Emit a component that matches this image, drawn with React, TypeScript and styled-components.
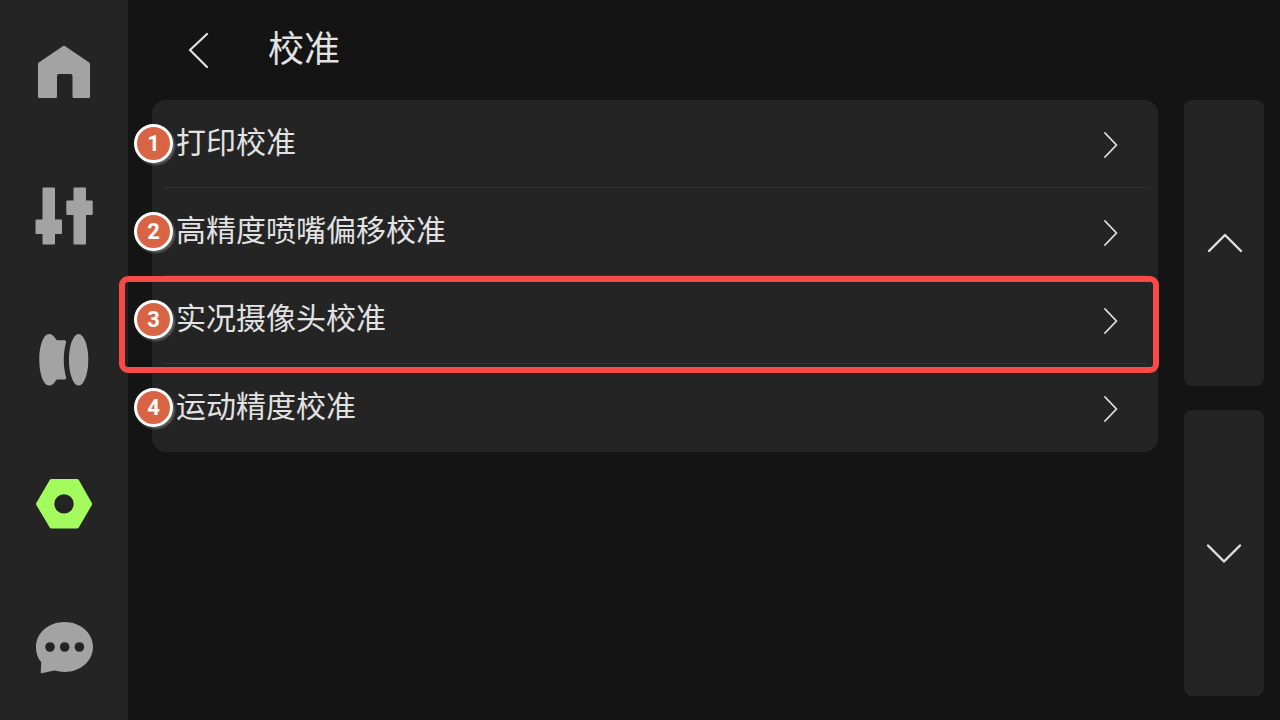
import React from "react";
import styled, { createGlobalStyle } from "styled-components";

const GlobalStyle = createGlobalStyle`
  *, *::before, *::after { box-sizing: border-box; }
  body {
    margin: 0;
    background: #141414;
    color: #e2e2e2;
    font-family: "Noto Sans CJK SC", "Noto Sans", sans-serif;
  }
  button { font: inherit; color: inherit; border: 0; padding: 0; cursor: pointer; }
`;

const Screen = styled.div`
  display: flex;
  min-height: 100vh;
`;

const Sidebar = styled.nav`
  flex: 0 0 128px;
  display: flex;
  flex-direction: column;
  background: #242424;
`;

const NavButton = styled.button<{ $active?: boolean }>`
  flex: 1;
  display: flex;
  align-items: center;
  justify-content: center;
  background: none;
  color: ${(p) => (p.$active ? "#a4fb5e" : "#a3a3a3")};
`;

const Main = styled.main`
  flex: 1;
  min-width: 0;
  display: flex;
  flex-direction: column;
  padding: 0 16px 24px 24px;
`;

const Header = styled.header`
  display: flex;
  align-items: center;
  gap: 44px;
  height: 100px;
  padding-left: 24px;
`;

const BackButton = styled.button`
  display: flex;
  background: none;
`;

const Title = styled.h1`
  margin: 0;
  padding-bottom: 8px;
  font-size: 36px;
  line-height: 48px;
  font-weight: 400;
`;

const Content = styled.div`
  flex: 1;
  display: flex;
  gap: 26px;
`;

const List = styled.ul`
  flex: 1;
  align-self: flex-start;
  margin: 0;
  padding: 0;
  list-style: none;
  background: #242424;
  border-radius: 14px;
`;

const Item = styled.li`
  position: relative;
  padding: 0 12px;
`;

const RowButton = styled.button<{ $divided: boolean }>`
  display: flex;
  align-items: center;
  justify-content: space-between;
  width: 100%;
  height: 88px;
  padding: 0 16px 0 12px;
  background: none;
  border-bottom: 1px solid ${(p) => (p.$divided ? "#323232" : "transparent")};
`;

const RowLabel = styled.span`
  padding-bottom: 8px;
  font-size: 30px;
  line-height: 40px;
`;

const Badge = styled.span`
  position: absolute;
  z-index: 2;
  top: 24px;
  left: -18px;
  display: flex;
  align-items: center;
  justify-content: center;
  width: 39px;
  height: 39px;
  border: 3px solid #fff;
  border-radius: 50%;
  background: #d96444;
  box-shadow: 2px 2px 2px rgba(130, 130, 130, 0.6);
  color: #fff;
  font: 700 22px/24px Roboto, "Liberation Sans", sans-serif;
`;

const Highlight = styled.span`
  position: absolute;
  z-index: 1;
  inset: 0 -1px -9px -33px;
  border: 6px solid #f84b48;
  border-radius: 9px;
  pointer-events: none;
`;

const Pager = styled.div`
  flex: 0 0 80px;
  display: flex;
  flex-direction: column;
  gap: 24px;
`;

const PageButton = styled.button`
  flex: 1;
  display: flex;
  align-items: center;
  justify-content: center;
  background: #242424;
  border-radius: 8px;
`;

const NavIcon = ({ children }: { children: React.ReactNode }) => (
  <svg width="80" height="80" viewBox="0 0 80 80" fill="currentColor" aria-hidden="true">
    {children}
  </svg>
);

const Stroke = ({ size, d, width }: { size: number; d: string; width: number }) => (
  <svg
    width={size}
    height={size}
    viewBox={`0 0 ${size} ${size}`}
    fill="none"
    stroke="currentColor"
    strokeWidth={width}
    strokeLinecap="round"
    strokeLinejoin="round"
    aria-hidden="true"
  >
    <path d={d} />
  </svg>
);

const navItems = [
  {
    name: "主页",
    icon: (
      <path d="M38.8 14.2Q40 13.2 41.2 14.2L65.2 30.4Q66 31 66 32V64.5Q66 66 64.5 66H50Q48.5 66 48.5 64.5V44Q48.5 42 46.5 42H35Q33 42 33 44V64.5Q33 66 31.5 66H15.5Q14 66 14 64.5V32Q14 31 14.8 30.4Z" />
    ),
  },
  {
    name: "控制",
    icon: (
      <path d="M19.5 11.5H30Q31 11.5 31 12.5V43.5H37Q38 43.5 38 44.5V57Q38 58 37 58H31V67.5Q31 68.5 30 68.5H19.5Q18.5 68.5 18.5 67.5V58H12.5Q11.5 58 11.5 57V44.5Q11.5 43.5 12.5 43.5H18.5V12.5Q18.5 11.5 19.5 11.5ZM50.5 11.5H61Q62 11.5 62 12.5V24.5H67.7Q68.7 24.5 68.7 25.5V38Q68.7 39 67.7 39H62V67.5Q62 68.5 61 68.5H50.5Q49.5 68.5 49.5 67.5V39H43.3Q42.3 39 42.3 38V25.5Q42.3 24.5 43.3 24.5H49.5V12.5Q49.5 11.5 50.5 11.5Z" />
    ),
  },
  {
    name: "耗材",
    icon: (
      <>
        <path d="M25 14C28 14 30 16 31.8 19Q32.4 20.2 33.5 20.2H40.5Q42.4 20.2 42.1 22C39 34 39 45 42.1 57.5Q42.5 59.5 40.5 59.5H33.5Q32.4 59.5 31.8 60.5C30 63.7 28 65.5 25 65.5C19.5 65.5 15.3 54 15.3 39.8C15.3 25.5 19.5 14 25 14Z" />
        <ellipse cx="54.6" cy="39.8" rx="9.7" ry="25.8" />
      </>
    ),
  },
  {
    name: "设置",
    active: true,
    icon: (
      <path
        fillRule="evenodd"
        d="M27.5 15H53Q54.2 15 54.8 16L67.9 39Q68.4 40 67.9 41L54.8 63.5Q54.2 64.5 53 64.5H27.5Q26.3 64.5 25.7 63.5L12.3 41Q11.8 40 12.3 39L25.7 16Q26.3 15 27.5 15ZM40 30.2A9.7 9.7 0 1 0 40 49.6A9.7 9.7 0 1 0 40 30.2Z"
      />
    ),
  },
  {
    name: "消息",
    icon: (
      <>
        <path d="M40.5 14C56.5 14 69 25 69 39C69 53 56.5 64 40.5 64Q35.5 64 30.5 62.6L17.5 65.3Q16.6 65.5 16.7 64.5L17.3 54.2C13.5 50 12 45 12 39C12 25 24.5 14 40.5 14Z" />
        <g fill="#242424">
          <circle cx="26" cy="39" r="4.8" />
          <circle cx="40.7" cy="39" r="4.8" />
          <circle cx="55.4" cy="39" r="4.8" />
        </g>
      </>
    ),
  },
];

const rows = [
  { label: "打印校准" },
  { label: "高精度喷嘴偏移校准" },
  { label: "实况摄像头校准", highlighted: true },
  { label: "运动精度校准" },
];

export default function App() {
  return (
    <>
      <GlobalStyle />
      <Screen>
        <Sidebar>
          {navItems.map((item) => (
            <NavButton key={item.name} $active={item.active} aria-label={item.name}>
              <NavIcon>{item.icon}</NavIcon>
            </NavButton>
          ))}
        </Sidebar>
        <Main>
          <Header>
            <BackButton aria-label="返回">
              <Stroke size={48} width={2.2} d="M31 8L14 24L31 41" />
            </BackButton>
            <Title>校准</Title>
          </Header>
          <Content>
            <List>
              {rows.map((row, i) => (
                <Item key={row.label}>
                  <Badge>{i + 1}</Badge>
                  <RowButton $divided={i < rows.length - 1}>
                    <RowLabel>{row.label}</RowLabel>
                    <Stroke size={40} width={1.8} d="M15 9L26.5 21L15 33" />
                  </RowButton>
                  {row.highlighted && <Highlight />}
                </Item>
              ))}
            </List>
            <Pager>
              <PageButton aria-label="上一页">
                <Stroke size={48} width={2.4} d="M9 32L25 16L41 32" />
              </PageButton>
              <PageButton aria-label="下一页">
                <Stroke size={48} width={2.4} d="M8 16.5L24 32.5L40 16.5" />
              </PageButton>
            </Pager>
          </Content>
        </Main>
      </Screen>
    </>
  );
}
